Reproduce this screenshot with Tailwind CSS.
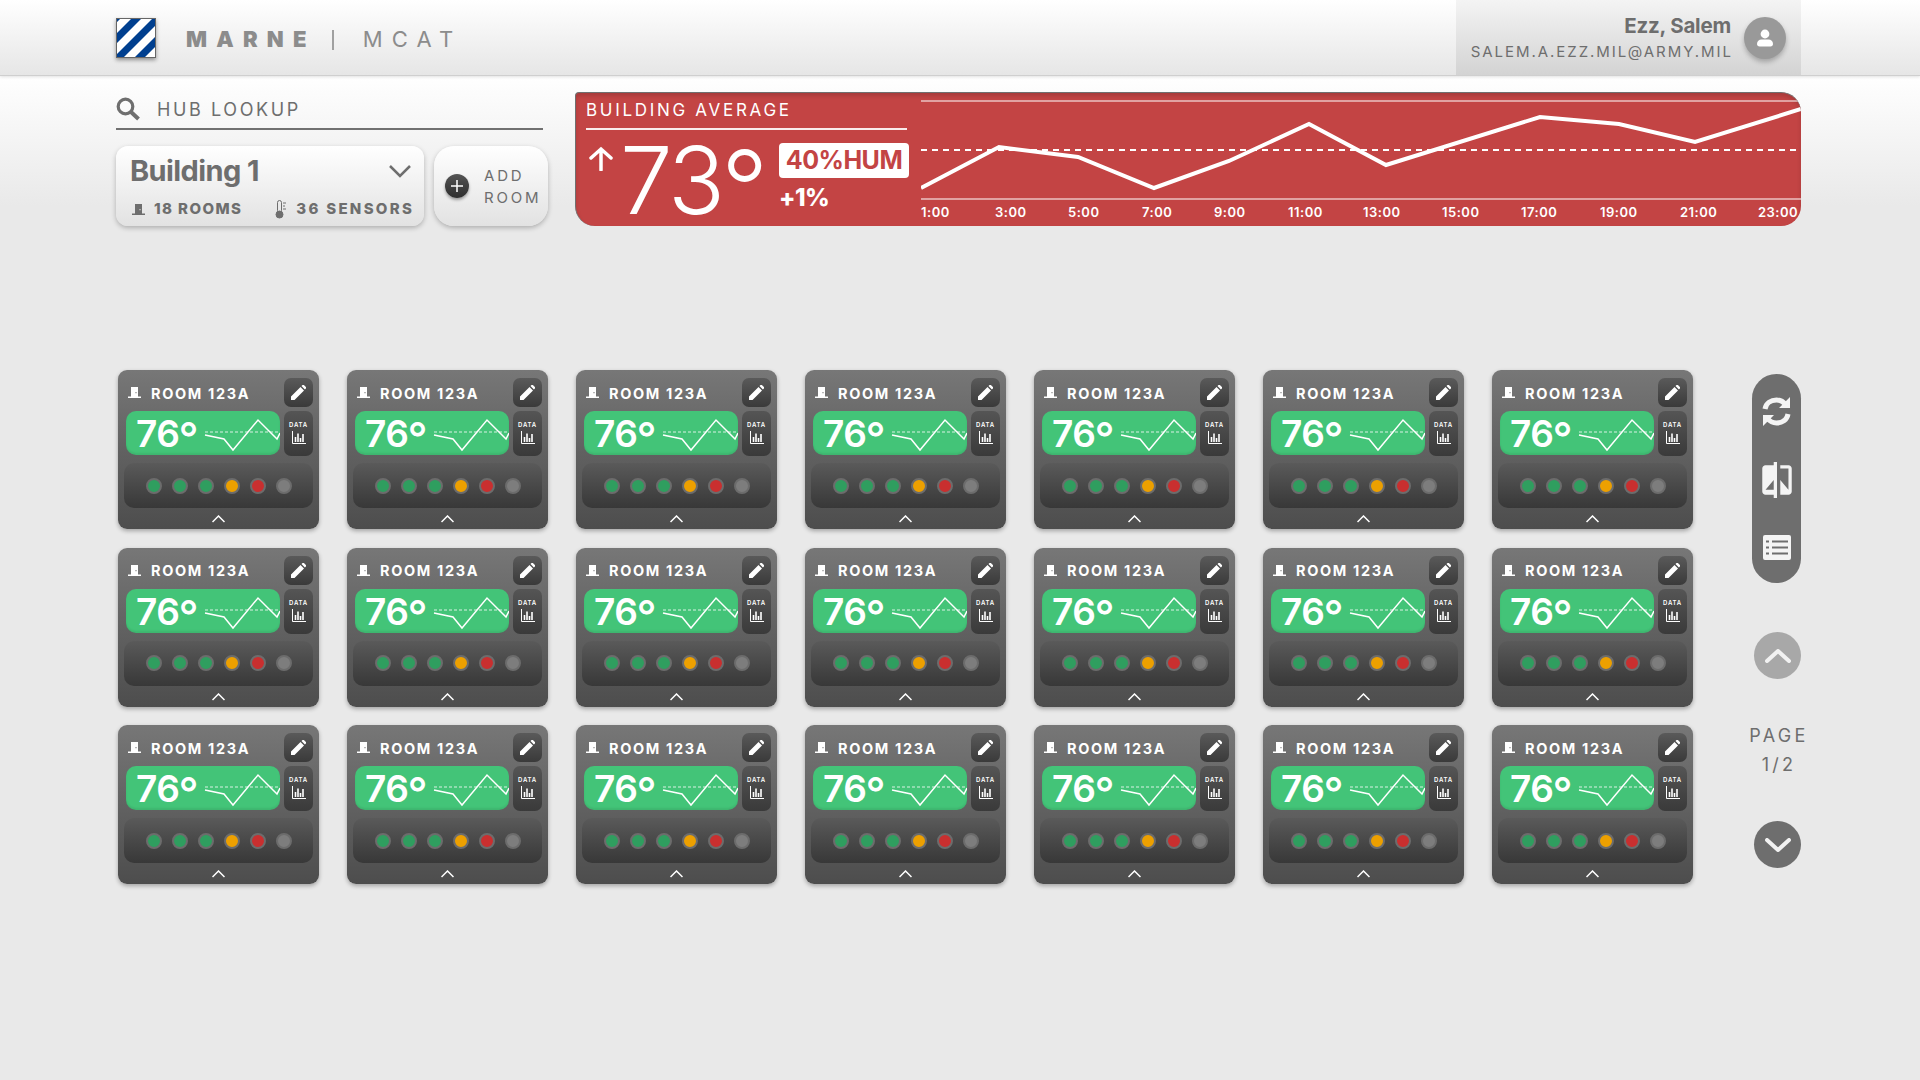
<!DOCTYPE html>
<html lang="en">

<head>
    <meta charset="UTF-8" />
    <title>Marne MCAT</title>
    <script src="https://cdn.jsdelivr.net/npm/@tailwindcss/browser@4"></script>
</head>

<body class="h-[1080px] w-[1920px] overflow-hidden bg-[#e9e9e9] [font-family:Inter,sans-serif] text-[#6e6e6e]">
    <svg class="hidden">
        <symbol id="door" viewBox="0 0 13 11"><path fill="currentColor" d="M3 0h7v9.5h3V11H0V9.5h3zM7.5 5v1.2h1V5z" /></symbol>
    </svg>

    <!-- top bar -->
    <header class="relative flex h-[76px] items-stretch justify-between border-b border-[#cfcfcf] bg-gradient-to-b from-white to-[#e6e6e6] pl-[116px] pr-[119px] shadow-[0_1px_3px_rgba(0,0,0,0.12)]">
        <div class="flex items-center">
            <svg class="h-10 w-10 shadow-[0_2px_4px_rgba(0,0,0,0.4)]" viewBox="0 0 40 40">
                <rect width="40" height="40" fill="#003f8f" />
                <path fill="#fff" d="M0 5 5 0h11L0 16zM0 26 26 0h11L0 37zM7 40 40 7v11L18 40zM28 40 40 28v11L39 40z" />
                <rect x=".5" y=".5" width="39" height="39" fill="none" stroke="#666" />
            </svg>
            <span class="ml-[30px] mt-1 text-[22px] font-black tracking-[9.2px] text-[#8c8c8c]">MARNE</span>
            <span class="ml-[16px] mt-1 h-5 w-[2px] bg-[#a0a0a0]"></span>
            <span class="ml-[29px] mt-1 text-[22px] font-normal tracking-[9.200px] text-[#8c8c8c]">MCAT</span>
        </div>
        <div class="flex w-[345px] items-center justify-end bg-gradient-to-b from-[#f4f4f4] to-[#d3d3d3] pr-[15px]">
            <div class="mr-[11px] mt-[2px] text-right">
                <div class="pr-[2px] text-[20.500px] font-bold leading-[26px] tracking-[-0.2px]">Ezz, Salem</div>
                <div class="text-[15px] font-normal leading-[25px] tracking-[1.95px]">SALEM.A.EZZ.MIL@ARMY.MIL</div>
            </div>
            <div class="flex h-[42px] w-[42px] items-center justify-center rounded-full bg-[#999] shadow-[0_3px_5px_rgba(0,0,0,0.25)]">
                <svg class="h-[18px] w-[18px] text-white" viewBox="0 0 18 18"><circle cx="9" cy="5" r="4.4" fill="currentColor" /><path fill="currentColor" d="M1 15c0-3 2-4.6 4.5-4.6h7c2.500 0 4.500 1.600 4.500 4.600 0 1.500-1 2.500-2.500 2.500h-11C2 17.500 1 16.500 1 15z" /></svg>
            </div>
        </div>
    </header>

    <main class="bg-gradient-to-b from-white to-[#e9e9e9] bg-[length:100%_130px] bg-no-repeat pl-[116px] pr-[119px] pt-4">
        <!-- lookup + building average -->
        <section class="flex gap-[27px]">
            <div class="w-[432px]">
                <div class="flex h-[38px] w-[427px] items-center border-b-2 border-[#707070] pb-[2px]">
                    <svg class="h-6 w-6 text-[#6e6e6e]" viewBox="0 0 24 24" fill="none" stroke="currentColor"><circle cx="9.500" cy="9.500" r="7.300" stroke-width="3.200" /><path d="m15 15 7.500 7" stroke-width="4" /></svg>
                    <span class="ml-[17px] text-[18px] font-normal tracking-[2.6px]">HUB LOOKUP</span>
                </div>
                <div class="mt-4 flex gap-[10px]">
                    <div class="h-20 w-[308px] rounded-[12px] bg-gradient-to-b from-white to-[#e2e2e2] px-[14px] pt-[7px] shadow-[0_2px_5px_rgba(0,0,0,0.25)]">
                        <div class="flex items-center justify-between">
                            <span class="text-[29px] font-bold leading-[36px] tracking-[-0.6px] text-[#6e6e6e]">Building 1</span>
                            <svg class="mr-[-1px] h-[14px] w-[22px]" viewBox="0 0 22 14" fill="none" stroke="#6e6e6e" stroke-width="2.500"><path d="m1 2 10 10L21 2" /></svg>
                        </div>
                        <div class="mt-[10px] flex items-center whitespace-nowrap text-[15px] font-extrabold leading-[20px]">
                            <svg class="ml-[2px] h-[11px] w-[13px] shrink-0"><use href="#door" /></svg>
                            <span class="ml-[9px] tracking-[1.4px]">18 ROOMS</span>
                            <svg class="ml-[33px] h-[19px] w-[11px] shrink-0" viewBox="0 0 11 19" fill="none" stroke="#6e6e6e"><rect x="2.500" y=".5" width="4" height="12" rx="2" /><circle cx="4.500" cy="14.500" r="3.500" fill="#6e6e6e" /><path d="M8 3h3M8 6h2M8 9h3" /></svg>
                            <span class="ml-[10px] tracking-[2.3px]">36 SENSORS</span>
                        </div>
                    </div>
                    <div class="flex h-20 w-[114px] items-center rounded-[20px] bg-gradient-to-b from-white to-[#e2e2e2] pl-[11px] shadow-[0_2px_5px_rgba(0,0,0,0.25)]">
                        <span class="flex h-6 w-6 items-center justify-center rounded-full bg-gradient-to-b from-[#555] to-[#2e2e2e] shadow-[0_2px_3px_rgba(0,0,0,0.35)]">
                            <svg class="h-3 w-3" viewBox="0 0 12 12" stroke="#fff" stroke-width="1.500"><path d="M6 0v12M0 6h12" /></svg>
                        </span>
                        <span class="ml-[15px] mt-[2px] text-[15px] font-normal leading-[22px] tracking-[2.8px]">ADD<br />ROOM</span>
                    </div>
                </div>
            </div>

            <div class="flex h-[134px] w-[1226px] overflow-hidden rounded-[4px_20px_20px_20px] border-t border-l border-[#6f6f6f] bg-[#c34444] text-white shadow-[inset_0_3px_4px_rgba(0,0,0,0.15)]">
                <div class="w-[346px] pl-[10px] pt-[5px]">
                    <div class="w-[321px] border-b-2 border-white/90 pb-[6px] text-[17px] font-normal leading-[24px] tracking-[2.7px]">BUILDING AVERAGE</div>
                    <div class="flex w-[323px]">
                        <svg class="ml-[3px] mt-[16px] h-[25px] w-[24px]" viewBox="0 0 24 25" fill="none" stroke="#fff" stroke-width="3.500" stroke-linecap="round"><path d="M12 3v21M2 12l10-9 10 9" /></svg>
                        <div class="ml-[7px] mt-[5px] text-[94px] font-light leading-[90px] tracking-[-3px]">73<span class="ml-[-1px] align-[-11px] text-[104px] leading-[0px] tracking-normal">°</span></div>
                        <div class="ml-auto mt-[13px]">
                            <div class="flex h-[35px] w-[130px] items-center justify-center rounded-[4px] bg-white text-[25px] font-bold tracking-[-0.5px] text-[#c34444]">40%HUM</div>
                            <div class="mt-[6px] text-[24px] font-extrabold leading-[28px] tracking-[-0.5px]">+1%</div>
                        </div>
                    </div>
                </div>
                <div class="ml-[-1px] flex w-[880px] flex-col">
                    <svg class="block" width="880" height="110" viewBox="921 93 880 110" fill="none">
                        <path d="M921 101h880M921 199h880" stroke="#fff" stroke-opacity=".5" stroke-width="2" />
                        <path d="M921 150h880" stroke="#fff" stroke-width="2" stroke-dasharray="6 5" />
                        <path d="M921 188 999 147 1078 157 1154 188 1229 161 1309 124 1386 165 1540 117 1619 124 1695 142 1801 109" stroke="#fff" stroke-width="4" />
                    </svg>
                    <div class="flex text-[13px] font-semibold leading-[18px] tracking-[0.5px]">
                        <span class="w-[74px]">1:00</span><span class="w-[73px]">3:00</span><span class="w-[74px]">5:00</span><span class="w-[72px]">7:00</span><span class="w-[74px]">9:00</span><span class="w-[75px]">11:00</span><span class="w-[79px]">13:00</span><span class="w-[79px]">15:00</span><span class="w-[79px]">17:00</span><span class="w-[80px]">19:00</span><span class="w-[78px]">21:00</span><span>23:00</span>
                    </div>
                </div>
            </div>
        </section>

        <!-- rooms + side controls -->
        <section class="mt-[144px] flex pl-[2px]">
            <div id="rooms" class="grid w-[1575px] grid-cols-[repeat(7,201px)] gap-x-[28px] gap-y-[18.5px]"></div>

            <div class="ml-[59px] mt-1 flex w-[49px] flex-col items-center">
                <div class="flex h-[209px] w-[49px] shrink-0 flex-col items-center rounded-full bg-[#6e6e6e]">
                    <svg class="mt-[22px] h-[31px] w-[31px] shrink-0 text-[#f4f4f4]" viewBox="0 0 31 31" fill="none" stroke="currentColor" stroke-width="5">
                        <path d="M4 13C5 7 10 4 15.500 4c4 0 7 2 9 4.500" />
                        <path d="M27 18c-1 6-6 9-11.500 9-4 0-7-2-9-4.500" />
                        <path fill="currentColor" stroke="none" d="M29 1v11H18zM2 30V19h11z" />
                    </svg>
                    <svg class="mt-[35px] h-[36px] w-[30px] shrink-0 text-[#f4f4f4]" viewBox="3 1 18 22">
                        <path fill="currentColor" d="M10 3H5c-1.100 0-2 .9-2 2v14c0 1.100.9 2 2 2h5v2h2V1h-2v2zm0 15H5l5-6v6zm9-15h-5v2h5v13l-5-6v9h5c1.100 0 2-.9 2-2V5c0-1.100-.9-2-2-2z" />
                    </svg>
                    <svg class="mt-[37px] h-[25px] w-[28px] shrink-0" viewBox="0 0 28 25">
                        <rect width="28" height="25" rx="2" fill="#f4f4f4" />
                        <path stroke="#6e6e6e" stroke-width="2" d="M3 6.500h3M9 6.500h16M3 12.500h3M9 12.500h16M3 18.500h3M9 18.500h16" />
                    </svg>
                </div>
                <button class="mt-[49px] flex h-[47px] w-[47px] shrink-0 items-center justify-center self-end rounded-full bg-[#a8a8a8]">
                    <svg class="h-[14px] w-[26px]" viewBox="0 0 26 14" fill="none" stroke="#f2f2f2" stroke-width="4" stroke-linecap="round" stroke-linejoin="round"><path d="m2 12 11-10 11 10" /></svg>
                </button>
                <div class="mt-[42px] pl-[5px] text-center text-[18px] font-normal leading-[29px] tracking-[3.3px] whitespace-nowrap">PAGE<br />1/2</div>
                <button class="mt-[42px] flex h-[47px] w-[47px] shrink-0 items-center justify-center self-end rounded-full bg-[#6e6e6e]">
                    <svg class="h-[14px] w-[26px]" viewBox="0 0 26 14" fill="none" stroke="#f2f2f2" stroke-width="4" stroke-linecap="round" stroke-linejoin="round"><path d="m2 2 11 10 11-10" /></svg>
                </button>
            </div>
        </section>
    </main>

    <script>
        const dots = ["bg-[#2f9e5f]", "bg-[#2f9e5f]", "bg-[#2f9e5f]", "bg-[#eda000]", "bg-[#c92f2f]", "bg-[#7d7d7d]"];
        const dotHtml = dots.map(c => `<span class="h-4 w-4 rounded-full border-2 border-[#6c6c6c] ${c}"></span>`).join("");

        const room = `
            <article class="flex h-[159px] flex-col rounded-[9px] bg-gradient-to-b from-[#777] to-[#4d4d4d] px-[6px] shadow-[0_2px_4px_rgba(0,0,0,0.3)]">
                <div class="mt-2 flex h-[29px] items-center">
                    <svg class="ml-[4px] h-[11px] w-[13px] text-white"><use href="#door" /></svg>
                    <span class="ml-[10px] mt-[2px] text-[14.500px] font-bold tracking-[1.65px] text-white">ROOM 123A</span>
                    <span class="ml-auto flex h-[29px] w-[29px] items-center justify-center rounded-[7px] bg-gradient-to-b from-[#5a5a5a] to-[#3a3a3a]">
                        <svg class="h-[15px] w-[15px]" viewBox="0 0 15 15"><path fill="#fff" d="M0 15v-3.500L9.500 2 13 5.500 3.500 15zM10.500 1l1-1a1 1 0 0 1 1.400 0l2 2a1 1 0 0 1 0 1.400l-1 1z" /></svg>
                    </span>
                </div>
                <div class="mt-[4px] flex h-[45px] gap-[4px]">
                    <div class="relative ml-[2px] h-[44px] w-[154px] rounded-[10px] bg-[#43c478] shadow-[inset_0_-2px_2px_rgba(0,0,0,0.08)]">
                        <span class="ml-[10px] block pt-[2px] text-[37px] font-semibold leading-[42px] tracking-[-0.5px] text-white">76<span class="ml-[-1px] align-[-7px] text-[44px] font-medium leading-[0px]">°</span></span>
                        <svg class="absolute left-0 top-0" width="154" height="44" fill="none" stroke="#fff">
                            <path d="M79 21h75" stroke-width="1" stroke-dasharray="3 2" stroke-opacity=".8" />
                            <path d="M79 24 98 28 107 39 132 9 151 28 154 22" stroke-width="1.500" />
                        </svg>
                    </div>
                    <div class="flex h-[45px] w-[29px] flex-col items-center rounded-[7px] bg-gradient-to-b from-[#555] to-[#3a3a3a] pt-[10px]">
                        <span class="text-[6px] font-semibold leading-[8px] tracking-[0.8px] text-white">DATA</span>
                        <svg class="mt-[2px] h-[13px] w-[14px]" viewBox="0 0 14 13" fill="none" stroke="#fff"><path d="M.5 0v12.500H14" /><path d="M3.500 11V6M6 11V2.500M8.500 11V7M11 11V3" stroke-width="1.600" /></svg>
                    </div>
                </div>
                <div class="mt-[7px] flex h-[45px] items-center justify-between rounded-[10px] bg-gradient-to-b from-[#5a5a5a] to-[#383838] pl-[22px] pr-[21px]">${dotHtml}</div>
                <svg class="mx-auto mt-[7px] h-[8px] w-[13px]" viewBox="0 0 13 8" fill="none" stroke="#fff" stroke-width="1.500"><path d="m.5 7 6-6 6 6" /></svg>
            </article>`;

        document.getElementById("rooms").innerHTML = room.repeat(21);
    </script>
</body>

</html>
